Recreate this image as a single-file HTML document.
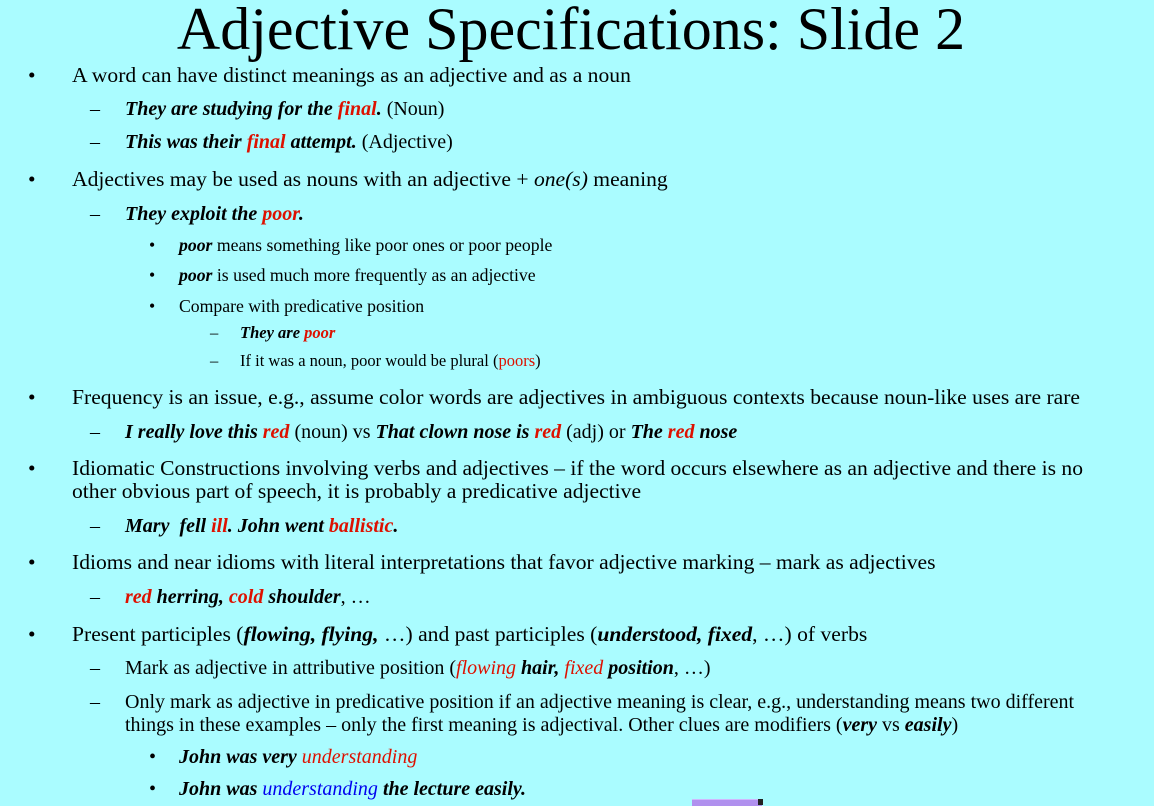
<!DOCTYPE html>
<html><head><meta charset="utf-8"><style>
html,body{margin:0;padding:0}
body{width:1154px;height:804px;background:#aafcff;position:relative;overflow:hidden;font-family:"Liberation Serif",serif;color:#000}
.l{position:absolute;white-space:nowrap;line-height:26px}
.r{color:#dd1100}
.b{color:#0000ee}
.t{position:absolute;left:0;width:1142px;text-align:center;top:-6px;font-size:60px;line-height:70px}
.s1{font-size:21.6px}
.s2{font-size:20px}
.s3{font-size:17.7px}
.s4{font-size:16.5px}
</style></head><body>
<div class="t">Adjective Specifications: Slide 2</div>

<div class="l s1" style="left:28px;top:62px">•</div>
<div class="l s1" style="left:72px;top:62px">A word can have distinct meanings as an adjective and as a noun</div>
<div class="l s2" style="left:90px;top:96px">–</div>
<div class="l s2" style="left:125px;top:96px"><b><i>They are studying for the <span class="r">final</span>.</i></b> (Noun)</div>
<div class="l s2" style="left:90px;top:129px">–</div>
<div class="l s2" style="left:125px;top:129px"><b><i>This was their <span class="r">final</span> attempt.</i></b> (Adjective)</div>

<div class="l s1" style="left:28px;top:166px">•</div>
<div class="l s1" style="left:72px;top:166px">Adjectives may be used as nouns with an adjective + <i>one(s)</i> meaning</div>
<div class="l s2" style="left:90px;top:201px">–</div>
<div class="l s2" style="left:125px;top:201px"><b><i>They exploit the <span class="r">poor</span>.</i></b></div>
<div class="l s3" style="left:149px;top:232px">•</div>
<div class="l s3" style="left:179px;top:232px"><b><i>poor</i></b> means something like poor ones or poor people</div>
<div class="l s3" style="left:149px;top:262px">•</div>
<div class="l s3" style="left:179px;top:262px"><b><i>poor</i></b> is used much more frequently as an adjective</div>
<div class="l s3" style="left:149px;top:293px">•</div>
<div class="l s3" style="left:179px;top:293px">Compare with predicative position</div>
<div class="l s4" style="left:210px;top:320px">–</div>
<div class="l s4" style="left:240px;top:320px"><b><i>They are <span class="r">poor</span></i></b></div>
<div class="l s4" style="left:210px;top:348px">–</div>
<div class="l s4" style="left:240px;top:348px">If it was a noun, poor would be plural (<span class="r">poors</span>)</div>

<div class="l s1" style="left:28px;top:384px">•</div>
<div class="l s1" style="left:72px;top:384px">Frequency is an issue, e.g., assume color words are adjectives in ambiguous contexts because noun-like uses are rare</div>
<div class="l s2" style="left:90px;top:419px">–</div>
<div class="l s2" style="left:125px;top:419px"><b><i>I really love this <span class="r">red</span></i></b> (noun) vs <b><i>That clown nose is <span class="r">red</span></i></b> (adj) or <b><i>The <span class="r">red</span> nose</i></b></div>

<div class="l s1" style="left:28px;top:455px">•</div>
<div class="l s1" style="left:72px;top:455px">Idiomatic Constructions involving verbs and adjectives – if the word occurs elsewhere as an adjective and there is no</div>
<div class="l s1" style="left:72px;top:478px">other obvious part of speech, it is probably a predicative adjective</div>
<div class="l s2" style="left:90px;top:513px">–</div>
<div class="l s2" style="left:125px;top:513px"><b><i>Mary&nbsp; fell <span class="r">ill</span>. John went <span class="r">ballistic</span>.</i></b></div>

<div class="l s1" style="left:28px;top:549px">•</div>
<div class="l s1" style="left:72px;top:549px">Idioms and near idioms with literal interpretations that favor adjective marking – mark as adjectives</div>
<div class="l s2" style="left:90px;top:584px">–</div>
<div class="l s2" style="left:125px;top:584px"><b><i><span class="r">red</span> herring, <span class="r">cold</span> shoulder</i></b>, …</div>

<div class="l s1" style="left:28px;top:621px">•</div>
<div class="l s1" style="left:72px;top:621px">Present participles (<b><i>flowing, flying,</i></b> …) and past participles (<b><i>understood, fixed</i></b>, …) of verbs</div>
<div class="l s2" style="left:90px;top:655px">–</div>
<div class="l s2" style="left:125px;top:655px">Mark as adjective in attributive position (<i><span class="r">flowing</span> <b>hair,</b> <span class="r">fixed</span> <b>position</b></i>, …)</div>
<div class="l s2" style="left:90px;top:689px">–</div>
<div class="l s2" style="left:125px;top:689px">Only mark as adjective in predicative position if an adjective meaning is clear, e.g., understanding means two different</div>
<div class="l s2" style="left:125px;top:712px">things in these examples – only the first meaning is adjectival. Other clues are modifiers (<b><i>very</i></b> vs <b><i>easily</i></b>)</div>
<div class="l s2" style="left:149px;top:744px">•</div>
<div class="l s2" style="left:179px;top:744px"><b><i>John was very <span class="r" style="font-weight:normal">understanding</span></i></b></div>
<div class="l s2" style="left:149px;top:776px">•</div>
<div class="l s2" style="left:179px;top:776px"><b><i>John was <span class="b" style="font-weight:normal">understanding</span> the lecture easily.</i></b></div>

<div style="position:absolute;left:692px;top:799px;width:70px;height:6px;background:#b090ee;border-top:1px solid #d0b8ff"></div>
<div style="position:absolute;left:758px;top:799px;width:5px;height:6px;background:#222"></div>
</body></html>
